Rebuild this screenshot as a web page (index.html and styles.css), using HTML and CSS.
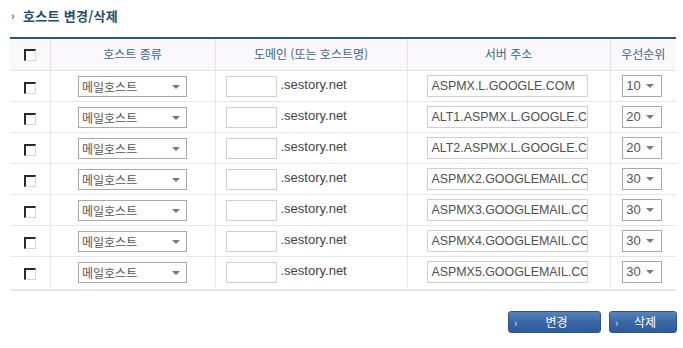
FILE: index.html
```html
<!DOCTYPE html>
<html lang="ko">
<head>
<meta charset="utf-8">
<link rel="stylesheet" href="styles.css">
</head>
<body>
<div class="page">
  <h2 class="title"><span class="title-arrow">›</span>호스트 변경/삭제</h2>
  <div class="table-wrap">
    <table class="grid">
      <colgroup>
        <col class="c1"><col class="c2"><col class="c3"><col class="c4"><col class="c5">
      </colgroup>
      <thead>
        <tr>
          <th><span class="chk"></span></th>
          <th>호스트 종류</th>
          <th>도메인 (또는 호스트명)</th>
          <th>서버 주소</th>
          <th>우선순위</th>
        </tr>
      </thead>
      <tbody>
        <tr>
          <td class="center"><span class="chk"></span></td>
          <td class="center"><div class="sel host"><span>메일호스트</span><i class="caret"></i></div></td>
          <td><div class="dom"><span class="box"></span><span class="suffix">.sestory.net</span></div></td>
          <td class="center"><div class="srv">ASPMX.L.GOOGLE.COM</div></td>
          <td class="center"><div class="sel pri"><span>10</span><i class="caret"></i></div></td>
        </tr>
        <tr>
          <td class="center"><span class="chk"></span></td>
          <td class="center"><div class="sel host"><span>메일호스트</span><i class="caret"></i></div></td>
          <td><div class="dom"><span class="box"></span><span class="suffix">.sestory.net</span></div></td>
          <td class="center"><div class="srv">ALT1.ASPMX.L.GOOGLE.COM</div></td>
          <td class="center"><div class="sel pri"><span>20</span><i class="caret"></i></div></td>
        </tr>
        <tr>
          <td class="center"><span class="chk"></span></td>
          <td class="center"><div class="sel host"><span>메일호스트</span><i class="caret"></i></div></td>
          <td><div class="dom"><span class="box"></span><span class="suffix">.sestory.net</span></div></td>
          <td class="center"><div class="srv">ALT2.ASPMX.L.GOOGLE.COM</div></td>
          <td class="center"><div class="sel pri"><span>20</span><i class="caret"></i></div></td>
        </tr>
        <tr>
          <td class="center"><span class="chk"></span></td>
          <td class="center"><div class="sel host"><span>메일호스트</span><i class="caret"></i></div></td>
          <td><div class="dom"><span class="box"></span><span class="suffix">.sestory.net</span></div></td>
          <td class="center"><div class="srv">ASPMX2.GOOGLEMAIL.COM</div></td>
          <td class="center"><div class="sel pri"><span>30</span><i class="caret"></i></div></td>
        </tr>
        <tr>
          <td class="center"><span class="chk"></span></td>
          <td class="center"><div class="sel host"><span>메일호스트</span><i class="caret"></i></div></td>
          <td><div class="dom"><span class="box"></span><span class="suffix">.sestory.net</span></div></td>
          <td class="center"><div class="srv">ASPMX3.GOOGLEMAIL.COM</div></td>
          <td class="center"><div class="sel pri"><span>30</span><i class="caret"></i></div></td>
        </tr>
        <tr>
          <td class="center"><span class="chk"></span></td>
          <td class="center"><div class="sel host"><span>메일호스트</span><i class="caret"></i></div></td>
          <td><div class="dom"><span class="box"></span><span class="suffix">.sestory.net</span></div></td>
          <td class="center"><div class="srv">ASPMX4.GOOGLEMAIL.COM</div></td>
          <td class="center"><div class="sel pri"><span>30</span><i class="caret"></i></div></td>
        </tr>
        <tr>
          <td class="center"><span class="chk"></span></td>
          <td class="center"><div class="sel host"><span>메일호스트</span><i class="caret"></i></div></td>
          <td><div class="dom"><span class="box"></span><span class="suffix">.sestory.net</span></div></td>
          <td class="center"><div class="srv">ASPMX5.GOOGLEMAIL.COM</div></td>
          <td class="center"><div class="sel pri"><span>30</span><i class="caret"></i></div></td>
        </tr>
      </tbody>
    </table>
  </div>
  <div class="actions">
    <button class="btn btn-wide"><span class="btn-arrow">›</span><span class="btn-label">변경</span></button>
    <button class="btn btn-narrow"><span class="btn-arrow">›</span><span class="btn-label">삭제</span></button>
  </div>
</div>
</body>
</html>
```

FILE: styles.css
```css
* { box-sizing: border-box; }
html, body { margin: 0; padding: 0; background: #fff; }
body {
  font-family: "Noto Sans CJK KR", "Liberation Sans", sans-serif;
  font-size: 12px;
  color: #444;
}
.page { width: 683px; padding: 0 0 0 10px; }

.title {
  margin: 0;
  height: 37px;
  padding: 5px 0 0 1px;
  font-size: 13px;
  font-weight: bold;
  line-height: 20px;
  color: #1f4d6b;
  letter-spacing: 0.3px;
}
.title-arrow {
  display: inline-block;
  width: 12px;
  font-size: 11px;
  color: #2c6a8c;
  vertical-align: 1px;
}

.table-wrap {
  width: 666px;
  border-top: 2px solid #2b5877;
  border-bottom: 2px solid #e6e6e6;
  padding-bottom: 2px;
}
.grid {
  width: 666px;
  border-collapse: collapse;
  table-layout: fixed;
}
.c1 { width: 40px; }
.c2 { width: 165px; }
.c3 { width: 192px; }
.c4 { width: 203px; }
.c5 { width: 66px; }

.grid th {
  height: 31px;
  background: #fbf8fb;
  font-weight: normal;
  font-size: 12px;
  color: #3a6494;
  border-bottom: 1px solid #e4e2e4;
  border-left: 1px solid #e6e4e6;
  text-align: center;
  padding: 0 0 2px;
}
.grid td {
  height: 31px;
  border-bottom: 1px solid #e6e6e6;
  border-left: 1px solid #e8e8e8;
  padding: 0;
  vertical-align: middle;
}
.grid tbody tr:last-child td { border-bottom: none; height: 31px; }
.grid th:first-child, .grid td:first-child { border-left: none; }
.center { text-align: center; }

.chk {
  display: inline-block;
  width: 12px;
  height: 12px;
  vertical-align: middle;
  background: #fff;
  border-top: 2px solid #2a2a2a;
  border-left: 2px solid #2a2a2a;
  border-right: 1px solid #d6d6d6;
  border-bottom: 1px solid #d6d6d6;
  margin-left: 1px;
}

.sel {
  display: inline-flex;
  align-items: center;
  position: relative;
  height: 21px;
  border: 1px solid #a9a9a9;
  background: #fff;
  color: #555;
  font-size: 12px;
  text-align: left;
  vertical-align: middle;
  padding-left: 3px;
}
.sel.host { width: 109px; margin-top: 1px; }
.sel.pri { width: 40px; height: 22px; margin-right: 2px; font-family: "Liberation Sans", sans-serif; font-size: 13px; }
.caret {
  position: absolute;
  right: 6px;
  top: 8px;
  width: 0;
  height: 0;
  border-left: 4px solid transparent;
  border-right: 4px solid transparent;
  border-top: 4px solid #7a7a7a;
}
.sel.pri .caret { right: 7px; }

.dom {
  display: flex;
  align-items: center;
  padding-left: 10px;
  margin-top: 1px;
}
.box {
  display: inline-block;
  width: 51px;
  height: 21px;
  border: 1px solid #cfcfcf;
  background: #fff;
}
.suffix {
  margin-left: 4px;
  font-family: "Liberation Sans", sans-serif;
  font-size: 13px;
  color: #444;
  padding-bottom: 3px;
}

.srv {
  display: inline-block;
  width: 161px;
  height: 22px;
  margin: 1px 3px 0 0;
  border: 1px solid #cfcfcf;
  padding: 2px 0 0 4px;
  overflow: hidden;
  white-space: nowrap;
  text-align: left;
  font-family: "Liberation Sans", sans-serif;
  font-size: 12.4px;
  line-height: 17px;
  color: #505050;
  vertical-align: middle;
}

.actions {
  display: flex;
  justify-content: flex-end;
  gap: 8px;
  width: 667px;
  margin-top: 20px;
}
.btn {
  position: relative;
  height: 22px;
  border: 1px solid #2d5588;
  border-radius: 3px;
  background: linear-gradient(#5583bf, #3a68a6 50%, #2e5c9a);
  color: #fff;
  font-family: "Noto Sans CJK KR", sans-serif;
  font-size: 12px;
  padding: 0;
  display: flex;
  align-items: center;
  justify-content: center;
}
.btn-wide { width: 93px; }
.btn-narrow { width: 68px; }
.btn-arrow {
  position: absolute;
  left: 5px;
  top: 2px;
  font-size: 11px;
  color: #e8eef8;
}
.btn-label { margin-left: 4px; line-height: 20px; }
```
